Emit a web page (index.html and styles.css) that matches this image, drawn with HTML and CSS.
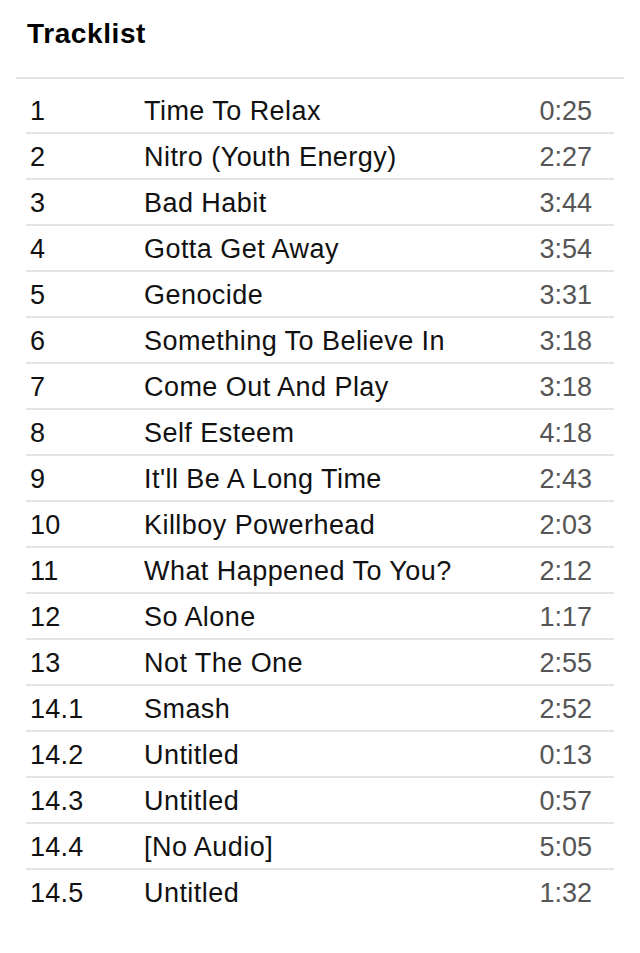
FILE: index.html
```html
<!DOCTYPE html>
<html lang="en">
<head>
<meta charset="utf-8">
<title>Tracklist</title>
<link rel="stylesheet" href="styles.css">
</head>
<body>
<main class="page">
  <h2 class="title">Tracklist</h2>
  <div class="divider"></div>
  <ol class="tracks">
    <li class="track"><span class="num">1</span><span class="name">Time To Relax</span><span class="dur">0:25</span></li>
    <li class="track"><span class="num">2</span><span class="name">Nitro (Youth Energy)</span><span class="dur">2:27</span></li>
    <li class="track"><span class="num">3</span><span class="name">Bad Habit</span><span class="dur">3:44</span></li>
    <li class="track"><span class="num">4</span><span class="name">Gotta Get Away</span><span class="dur">3:54</span></li>
    <li class="track"><span class="num">5</span><span class="name">Genocide</span><span class="dur">3:31</span></li>
    <li class="track"><span class="num">6</span><span class="name">Something To Believe In</span><span class="dur">3:18</span></li>
    <li class="track"><span class="num">7</span><span class="name">Come Out And Play</span><span class="dur">3:18</span></li>
    <li class="track"><span class="num">8</span><span class="name">Self Esteem</span><span class="dur">4:18</span></li>
    <li class="track"><span class="num">9</span><span class="name">It'll Be A Long Time</span><span class="dur">2:43</span></li>
    <li class="track"><span class="num">10</span><span class="name">Killboy Powerhead</span><span class="dur">2:03</span></li>
    <li class="track"><span class="num">11</span><span class="name">What Happened To You?</span><span class="dur">2:12</span></li>
    <li class="track"><span class="num">12</span><span class="name">So Alone</span><span class="dur">1:17</span></li>
    <li class="track"><span class="num">13</span><span class="name">Not The One</span><span class="dur">2:55</span></li>
    <li class="track"><span class="num">14.1</span><span class="name">Smash</span><span class="dur">2:52</span></li>
    <li class="track"><span class="num">14.2</span><span class="name">Untitled</span><span class="dur">0:13</span></li>
    <li class="track"><span class="num">14.3</span><span class="name">Untitled</span><span class="dur">0:57</span></li>
    <li class="track"><span class="num">14.4</span><span class="name">[No Audio]</span><span class="dur">5:05</span></li>
    <li class="track"><span class="num">14.5</span><span class="name">Untitled</span><span class="dur">1:32</span></li>
  </ol>
</main>
</body>
</html>
```

FILE: styles.css
```css
html, body {
  margin: 0;
  padding: 0;
  background: #ffffff;
}

body {
  font-family: "Liberation Sans", Arial, Helvetica, sans-serif;
  color: #000000;
}

.page {
  padding: 18px 16px 0;
}

.title {
  margin: 0 0 27px 11px;
  font-size: 28px;
  line-height: 32px;
  font-weight: bold;
  letter-spacing: 0.6px;
  color: #000000;
}

.divider {
  height: 2px;
  background: #e4e4e4;
}

.tracks {
  list-style: none;
  margin: 9px 10px 0;
  padding: 0;
}

.track {
  display: grid;
  grid-template-columns: 118px 1fr auto;
  align-items: center;
  height: 42px;
  padding-top: 2px;
  line-height: 42px;
  font-size: 27px;
  border-bottom: 2px solid #e4e4e4;
}

.track:last-child {
  border-bottom: none;
}

.num {
  padding-left: 4px;
  letter-spacing: 0.2px;
  color: #111111;
}

.name {
  letter-spacing: 0.45px;
  color: #111111;
}

.dur {
  padding-right: 22px;
  color: #555555;
}
```
